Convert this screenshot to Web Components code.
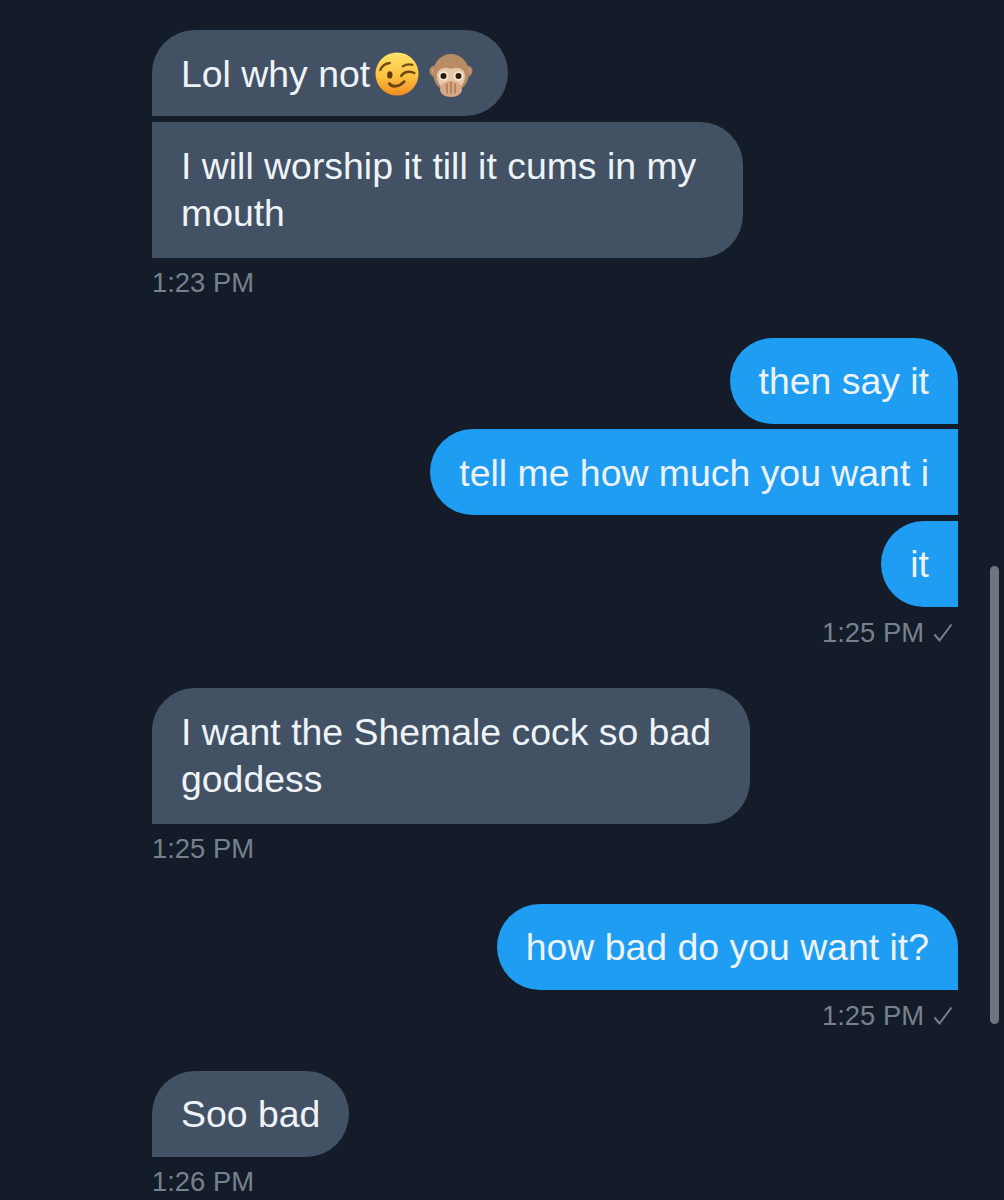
<!DOCTYPE html>
<html>
<head>
<meta charset="utf-8">
<title>Messages</title>
<style>
  html, body { margin: 0; height: 1200px; overflow: hidden; background: #141c2a; }
</style>
</head>
<body>
<chat-log>
  <chat-group side="in">
    <chat-bubble pos="first">Lol why not<emoji-wink></emoji-wink><emoji-monkey></emoji-monkey></chat-bubble>
    <chat-bubble pos="last" width="591">I will worship it till it cums in my<br>mouth</chat-bubble>
    <chat-time>1:23 PM</chat-time>
  </chat-group>
  <chat-group side="out">
    <chat-bubble pos="first">then say it</chat-bubble>
    <chat-bubble pos="mid">tell me how much you want i</chat-bubble>
    <chat-bubble pos="last">it</chat-bubble>
    <chat-time seen>1:25 PM</chat-time>
  </chat-group>
  <chat-group side="in">
    <chat-bubble pos="single" width="598">I want the Shemale cock so bad<br>goddess</chat-bubble>
    <chat-time>1:25 PM</chat-time>
  </chat-group>
  <chat-group side="out">
    <chat-bubble pos="single">how bad do you want it?</chat-bubble>
    <chat-time seen>1:25 PM</chat-time>
  </chat-group>
  <chat-group side="in">
    <chat-bubble pos="single">Soo bad</chat-bubble>
    <chat-time>1:26 PM</chat-time>
  </chat-group>
</chat-log>

<script>
class ChatLog extends HTMLElement {
  constructor() {
    super();
    this.attachShadow({ mode: 'open' });
    this.shadowRoot.innerHTML = `
      <style>
        :host {
          display: flex;
          flex-direction: column;
          gap: 36px;
          position: relative;
          box-sizing: border-box;
          height: 1200px;
          padding: 30px 46px 0 152px;
          overflow: hidden;
          background: #141c2a;
          font-family: "Liberation Sans", Arial, sans-serif;
        }
        .scrollbar {
          position: absolute;
          left: 990px;
          top: 566px;
          width: 9px;
          height: 458px;
          border-radius: 5px;
          background: #70747f;
        }
      </style>
      <slot></slot>
      <div class="scrollbar"></div>
    `;
  }
}

class ChatGroup extends HTMLElement {
  constructor() {
    super();
    this.attachShadow({ mode: 'open' });
    this.shadowRoot.innerHTML = `
      <style>
        :host {
          display: flex;
          flex-direction: column;
          gap: 5.5px;
          align-items: flex-start;
        }
        :host([side="out"]) { align-items: flex-end; }
      </style>
      <slot></slot>
    `;
  }
}

class ChatBubble extends HTMLElement {
  constructor() {
    super();
    this.attachShadow({ mode: 'open' });
    this.shadowRoot.innerHTML = `
      <style>
        :host {
          display: flex;
          align-items: center;
          box-sizing: border-box;
          padding: 20.5px 29px 18.5px;
          font-size: 37.4px;
          line-height: 47px;
          white-space: nowrap;
          color: #eef3f8;
          background: #425163;
          border-radius: 43px 43px 43px 0;
        }
        :host([width]) { padding-top: 21px; padding-bottom: 21px; }
        :host-context(chat-group[side="out"]) {
          background: #1e9df3;
          border-radius: 43px 43px 0 43px;
        }
        :host([pos="mid"]), :host([pos="last"]) { border-top-left-radius: 0; }
        :host-context(chat-group[side="out"]):host([pos="mid"]),
        :host-context(chat-group[side="out"]):host([pos="last"]) {
          border-top-left-radius: 43px;
          border-top-right-radius: 0;
        }
        .text { display: block; }
      </style>
      <div class="text"><slot></slot></div>
    `;
  }

  connectedCallback() {
    const width = this.getAttribute('width');
    if (width) this.style.width = width + 'px';
  }
}

class ChatTime extends HTMLElement {
  constructor() {
    super();
    this.attachShadow({ mode: 'open' });
    const seen = this.hasAttribute('seen');
    this.shadowRoot.innerHTML = `
      <style>
        :host {
          display: flex;
          align-items: center;
          gap: 9px;
          margin-top: 0.5px;
          height: 38px;
          font-family: "Liberation Sans", Arial, sans-serif;
          font-size: 27.4px;
          color: #77818e;
        }
        :host([seen]) { margin-right: 5px; margin-top: 1.5px; }
        svg { display: block; }
      </style>
      <slot></slot>
      ${seen ? `<svg width="20" height="20" viewBox="0 0 20 20" fill="none" stroke="#77818e" stroke-width="2">
        <path d="M1.5 11.5l5 6L18.500 1.500"/>
      </svg>` : ''}
    `;
  }
}

class EmojiWink extends HTMLElement {
  constructor() {
    super();
    this.attachShadow({ mode: 'open' });
    this.shadowRoot.innerHTML = `
      <style>
        /* box is shorter than the glyph so it does not grow the line */
        :host { display: inline-block; width: 44px; height: 30px; vertical-align: -5px; margin-left: 5px; }
        svg { display: block; margin-top: -10px; }
      </style>
      <svg width="44" height="44" viewBox="0 0 46 46">
        <defs>
          <linearGradient id="f" x1="0" y1="0" x2="0" y2="1">
            <stop offset="0" stop-color="#ffe36a"/>
            <stop offset="0.55" stop-color="#fdc23f"/>
            <stop offset="1" stop-color="#f08c22"/>
          </linearGradient>
        </defs>
        <circle cx="23" cy="23" r="22.500" fill="url(#f)"/>
        <ellipse cx="15.500" cy="24" rx="2.800" ry="3.800" fill="#5a3a12"/>
        <path d="M27.500 25c2-4 9-6 13.500-3" fill="none" stroke="#6b4514" stroke-width="2.600" stroke-linecap="round"/>
        <path d="M5.500 19c1.500-4 5.500-7 10-7.500M29 15c3-2 7-2.500 10-1.500" fill="none" stroke="#7a4f16" stroke-width="2.400" stroke-linecap="round"/>
        <path d="M15 33c3 4 10 4 15.500-2" fill="none" stroke="#6b4514" stroke-width="3" stroke-linecap="round"/>
      </svg>
    `;
  }
}

class EmojiMonkey extends HTMLElement {
  constructor() {
    super();
    this.attachShadow({ mode: 'open' });
    this.shadowRoot.innerHTML = `
      <style>
        :host { display: inline-block; width: 44px; height: 30px; vertical-align: -5px; margin-left: 10px; margin-right: 6px; }
        svg { display: block; margin-top: -10px; }
      </style>
      <svg width="44" height="46" viewBox="0 0 44 46">
        <circle cx="6" cy="19" r="5.500" fill="#b98d64"/>
        <circle cx="38" cy="19" r="5.500" fill="#b98d64"/>
        <circle cx="6" cy="19" r="3" fill="#d99f8c"/>
        <circle cx="38" cy="19" r="3" fill="#d99f8c"/>
        <ellipse cx="22" cy="21" rx="18" ry="19" fill="#b98d64"/>
        <path d="M8 24c0-7 7-10 14-7 7-3 14 0 14 7 0 8-6 15-14 15S8 32 8 24z" fill="#e3c7a6"/>
        <circle cx="14.500" cy="24" r="4.800" fill="#f3e6d4"/>
        <circle cx="29.500" cy="24" r="4.800" fill="#f3e6d4"/>
        <circle cx="14.500" cy="24" r="3" fill="#2b1c10"/>
        <circle cx="29.500" cy="24" r="3" fill="#2b1c10"/>
        <path d="M11 37c1-5 6-8 11-8s10 3 11 8c0 5-5 8-11 8s-11-3-11-8z" fill="#d9a884"/>
        <path d="M18 32v9M22 30v11M26 32v9" stroke="#a97a57" stroke-width="1.500" fill="none" stroke-linecap="round"/>
      </svg>
    `;
  }
}

customElements.define('chat-log', ChatLog);
customElements.define('chat-group', ChatGroup);
customElements.define('chat-bubble', ChatBubble);
customElements.define('chat-time', ChatTime);
customElements.define('emoji-wink', EmojiWink);
customElements.define('emoji-monkey', EmojiMonkey);
</script>
</body>
</html>
